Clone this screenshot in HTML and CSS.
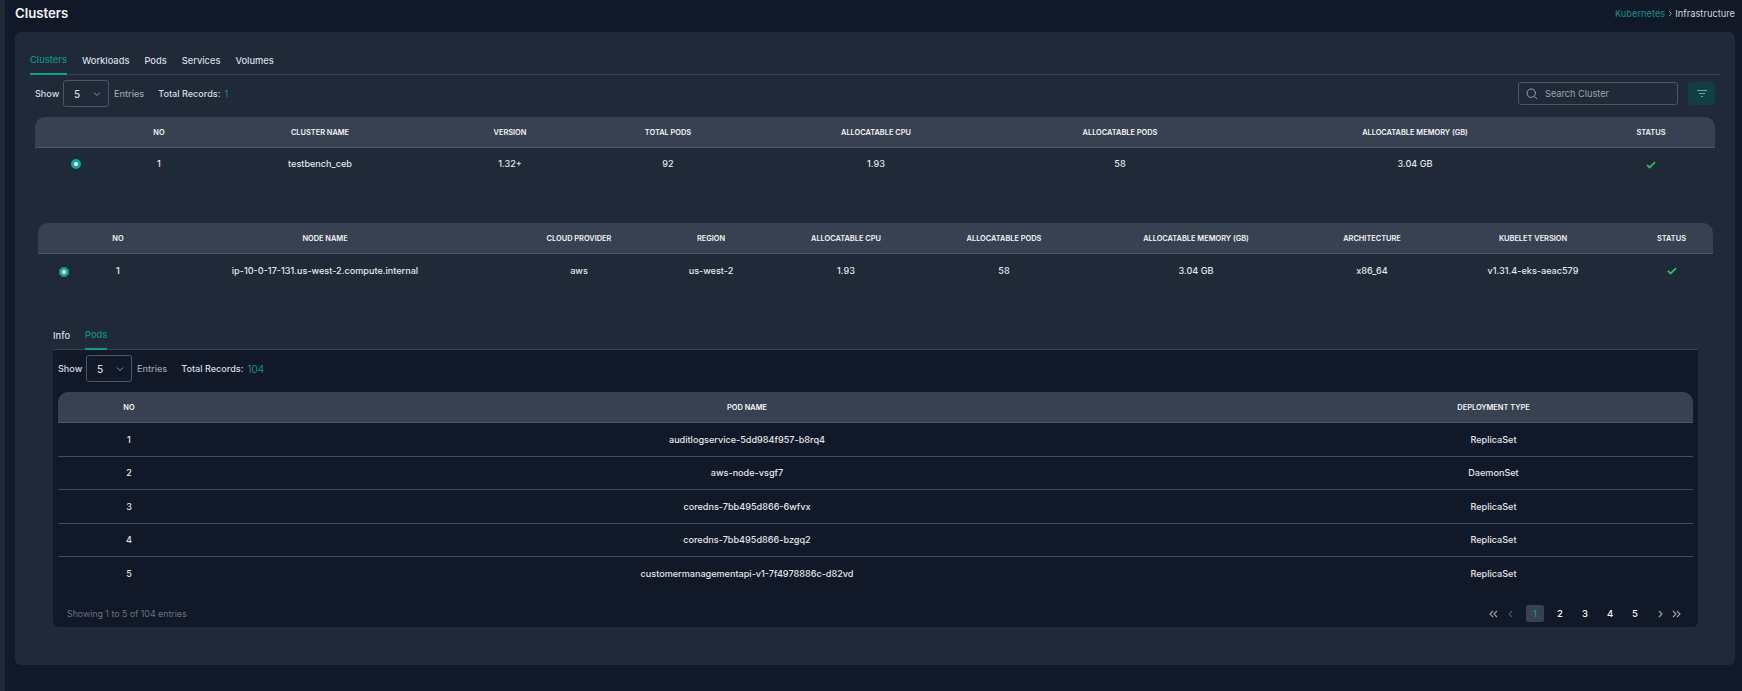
FILE: index.html
```html
<!DOCTYPE html>
<html lang="en">
<head>
<meta charset="utf-8">
<title>Clusters</title>
<link rel="stylesheet" href="styles.css">
</head>
<body>
<div class="rail"></div>
<main class="main">
  <header class="page-head">
    <h1>Clusters</h1>
    <nav class="crumbs"><a>Kubernetes</a><svg class="sep" width="5" height="7" viewBox="0 0 5 7"><path d="M1 1 3.5 3.5 1 6" fill="none" stroke="#8a93a3" stroke-width="1"/></svg><span>Infrastructure</span></nav>
  </header>
  <section class="card">
    <div class="tabs">
      <span class="tab active">Clusters</span><span class="tab">Workloads</span><span class="tab">Pods</span><span class="tab">Services</span><span class="tab">Volumes</span>
    </div>
    <div class="toolbar">
      <span class="lbl show">Show</span>
      <div class="select"><span>5</span><svg width="8" height="8" viewBox="0 0 8 8"><path d="M1 2.5 4 5.5 7 2.5" fill="none" stroke="#8a93a3" stroke-width="1"/></svg></div>
      <span class="lbl muted">Entries</span>
      <span class="lbl total">Total Records:</span><span class="count">1</span>
      <div class="spacer"></div>
      <div class="search">
        <svg width="14" height="14" viewBox="0 0 14 14"><circle cx="6.2" cy="6.2" r="4.2" fill="none" stroke="#9aa3b2" stroke-width="1"/><path d="M9.4 9.4 12 12" stroke="#9aa3b2" stroke-width="1"/></svg>
        <span>Search Cluster</span>
      </div>
      <button class="filter"><svg width="12" height="10" viewBox="0 0 12 10"><path d="M1 1.5H11M3 4.5H9M5 7.5H7" stroke="#4fb3a9" stroke-width="1.2" fill="none"/></svg></button>
    </div>

    <div class="table t1">
      <div class="row head"><div></div><div>NO</div><div>CLUSTER NAME</div><div>VERSION</div><div>TOTAL PODS</div><div>ALLOCATABLE CPU</div><div>ALLOCATABLE PODS</div><div>ALLOCATABLE MEMORY (GB)</div><div>STATUS</div></div>
      <div class="row"><div><i class="radio"></i></div><div>1</div><div>testbench_ceb</div><div>1.32+</div><div>92</div><div>1.93</div><div>58</div><div>3.04 GB</div><div><svg class="check" width="10" height="8" viewBox="0 0 10 8"><path d="M1 4 3.6 6.6 9 1.2" fill="none" stroke="#22c55e" stroke-width="1.8"/></svg></div></div>
    </div>

    <div class="table t2">
      <div class="row head"><div></div><div>NO</div><div>NODE NAME</div><div>CLOUD PROVIDER</div><div>REGION</div><div>ALLOCATABLE CPU</div><div>ALLOCATABLE PODS</div><div>ALLOCATABLE MEMORY (GB)</div><div>ARCHITECTURE</div><div>KUBELET VERSION</div><div>STATUS</div></div>
      <div class="row"><div><i class="radio"></i></div><div>1</div><div>ip-10-0-17-131.us-west-2.compute.internal</div><div>aws</div><div>us-west-2</div><div>1.93</div><div>58</div><div>3.04 GB</div><div>x86_64</div><div>v1.31.4-eks-aeac579</div><div><svg class="check" width="10" height="8" viewBox="0 0 10 8"><path d="M1 4 3.6 6.6 9 1.2" fill="none" stroke="#22c55e" stroke-width="1.8"/></svg></div></div>
    </div>

    <div class="detail">
      <div class="tabs sub"><span class="tab">Info</span><span class="tab active">Pods</span></div>
      <div class="panel">
        <div class="toolbar">
          <span class="lbl show">Show</span>
          <div class="select"><span>5</span><svg width="8" height="8" viewBox="0 0 8 8"><path d="M1 2.5 4 5.5 7 2.5" fill="none" stroke="#8a93a3" stroke-width="1"/></svg></div>
          <span class="lbl muted">Entries</span>
          <span class="lbl total">Total Records:</span><span class="count big">104</span>
        </div>
        <div class="table t3">
          <div class="row head"><div>NO</div><div>POD NAME</div><div>DEPLOYMENT TYPE</div></div>
          <div class="row"><div>1</div><div>auditlogservice-5dd984f957-b8rq4</div><div>ReplicaSet</div></div>
          <div class="row"><div>2</div><div>aws-node-vsgf7</div><div>DaemonSet</div></div>
          <div class="row"><div>3</div><div>coredns-7bb495d866-6wfvx</div><div>ReplicaSet</div></div>
          <div class="row"><div>4</div><div>coredns-7bb495d866-bzgq2</div><div>ReplicaSet</div></div>
          <div class="row"><div>5</div><div>customermanagementapi-v1-7f4978886c-d82vd</div><div>ReplicaSet</div></div>
        </div>
        <div class="foot">
          <span class="showing">Showing 1 to 5 of 104 entries</span>
          <div class="pager">
            <span class="pg first"><svg width="9" height="8" viewBox="0 0 9 8"><path d="M4 1 1 4 4 7M8 1 5 4 8 7" fill="none" stroke="#9ca3af" stroke-width="1.1"/></svg></span>
            <span class="pg"><svg width="5" height="8" viewBox="0 0 5 8"><path d="M4 1 1 4 4 7" fill="none" stroke="#4b5563" stroke-width="1.1"/></svg></span>
            <span class="pg current">1</span><span class="pg">2</span><span class="pg">3</span><span class="pg">4</span><span class="pg">5</span>
            <span class="pg"><svg width="5" height="8" viewBox="0 0 5 8"><path d="M1 1 4 4 1 7" fill="none" stroke="#9ca3af" stroke-width="1.1"/></svg></span>
            <span class="pg last"><svg width="9" height="8" viewBox="0 0 9 8"><path d="M1 1 4 4 1 7M5 1 8 4 5 7" fill="none" stroke="#9ca3af" stroke-width="1.1"/></svg></span>
          </div>
        </div>
      </div>
    </div>
  </section>
</main>
</body>
</html>
```
FILE: styles.css
```css
* { box-sizing: border-box; }
html, body { height: 100%; }
body {
  margin: 0;
  display: flex;
  height: 691px;
  overflow: hidden;
  background: #111827;
  color: #e5e7eb;
  font-family: "Inter", "Liberation Sans", sans-serif;
  font-size: 9.2px;
}
.rail { width: 5px; background: #1f2937; flex: none; }
.main { flex: 1; padding: 0 7px 0 10px; min-width: 0; }

.page-head { display: flex; justify-content: space-between; align-items: center; height: 32px; padding-bottom: 6px; }
.page-head h1 { margin: 0; font-size: 13.2px; font-weight: 600; color: #f3f4f6; }
.crumbs { display: flex; align-items: center; gap: 2.5px; font-size: 9.3px; color: #d1d5db; }
.crumbs a { color: #0d9488; }

.card { height: 633px; background: #1f2937; border-radius: 6px; padding: 15px; }

.tabs { display: flex; gap: 15px; height: 28px; align-items: flex-end; border-bottom: 1px solid #374151; }
.tab { padding-bottom: 6px; line-height: 14px; font-size: 9.3px; font-weight: 500; color: #d7dce4; }
.tab.active { color: #0d9488; border-bottom: 2px solid #0d9f94; margin-bottom: -1px; }

.toolbar { display: flex; align-items: center; height: 27px; margin-top: 5px; padding: 0 5px; color: #d7dce4; }
.lbl { font-size: 9.1px; font-weight: 500; }
.lbl.show { width: 23px; }
.muted { color: #9ca3af; }
.select { width: 46px; height: 27px; margin: 0 5px; border: 1px solid #4b5563; border-radius: 3px; padding: 0 7px 0 10px; display: flex; align-items: center; justify-content: space-between; font-size: 10px; font-weight: 500; }
.total { margin-left: 14px; }
.count { margin-left: 4px; color: #0d9488; }
.count.big { font-size: 10px; }
.spacer { flex: 1; }
.search { width: 160px; height: 23px; border: 1px solid #4b5563; border-radius: 3px; display: flex; align-items: center; gap: 6px; padding-left: 6px; color: #9ca3af; font-size: 9.2px; }
.filter { width: 27px; height: 23px; margin-left: 10px; border: 0; border-radius: 3px; background: #123f42; display: flex; align-items: center; justify-content: center; padding: 0; }

.row { display: grid; align-items: center; text-align: center; height: 33.4px; border-bottom: 1px solid #414b5c; font-size: 9.1px; font-weight: 500; color: #e5e7eb; }
.row:last-child { border-bottom: 0; }
.row.head { height: 31px; background: #374151; border-bottom: 1px solid #4b5563; border-radius: 10px 10px 0 0; font-size: 7.4px; font-weight: 600; color: #f3f4f6; }

.t1 { margin: 10px 5px 0; }
.t1 .row { grid-template-columns: 82px 84px 238px 142px 174px 242px 246px 344px 128px; }
.t2 { margin: 42px 7px 0 8px; }
.t2 .row { grid-template-columns: 52px 56px 358px 150px 114px 156px 160px 224px 128px 194px 83px; }
.t1 .row:not(.head), .t2 .row:not(.head) { padding-bottom: 2px; }
.t3 { margin: 10px 5px 0; }
.t3 .row { grid-template-columns: 142px 1094px 399px; }

.radio { display: inline-block; width: 10px; height: 10px; border-radius: 50%; background: #fff; border: 3px solid #0fa89b; vertical-align: middle; }
.t2 .radio { margin-top: 3px; }
.check { vertical-align: middle; }

.detail { margin: 34.6px 7px 0 8px; padding: 0 15px; }
.panel { height: 277px; background: #111827; border-radius: 0 0 6px 6px; overflow: hidden; }

.foot { display: flex; justify-content: space-between; align-items: center; padding: 15px 13px 0 14px; }
.showing { font-size: 8.8px; color: #6b7280; }
.pager { display: flex; align-items: center; gap: 7px; }
.pg { width: 18px; height: 17px; display: flex; align-items: center; justify-content: center; border-radius: 2px; font-size: 9.5px; font-weight: 500; color: #f3f4f6; }
.pg.first { margin-right: -8px; }
.pg.last { margin-left: -9px; }
.pg.current { background: #374151; color: #0d9488; }
```
